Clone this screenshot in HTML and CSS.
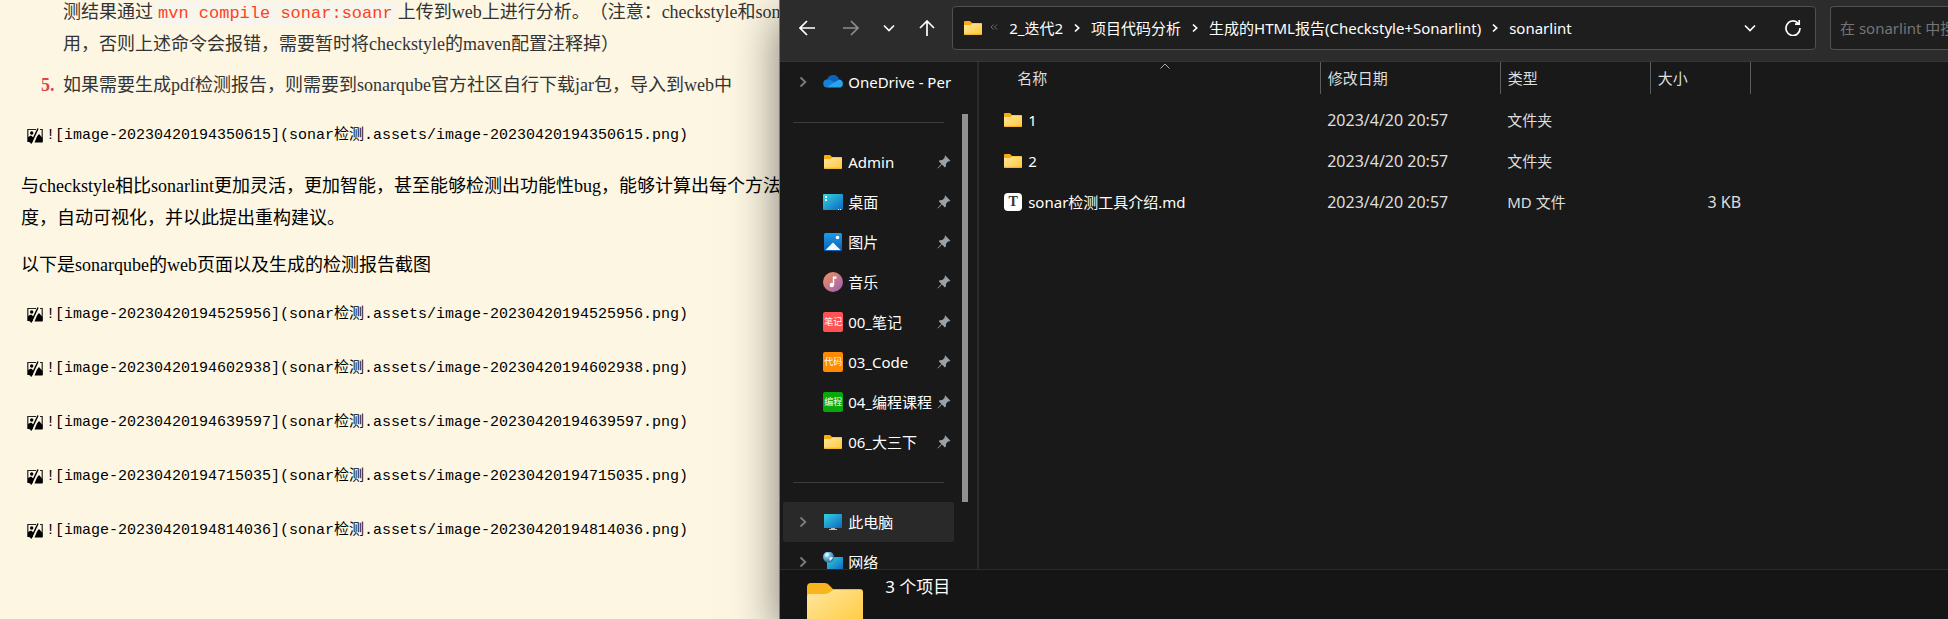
FILE: index.html
```html
<!DOCTYPE html>
<html lang="zh-CN">
<head>
<meta charset="utf-8">
<title>sonarlint</title>
<link rel="stylesheet" href="styles.css">
</head>
<body>
<svg class="defs" aria-hidden="true">
  <defs>
    <linearGradient id="g-folder" x1="0" y1="0" x2="1" y2="1"><stop offset="0" stop-color="#ffe7a0"/><stop offset="1" stop-color="#ffc938"/></linearGradient>
    <linearGradient id="g-desk" x1="0" y1="0" x2="1" y2="1"><stop offset="0" stop-color="#35d3e0"/><stop offset="1" stop-color="#0c66c0"/></linearGradient>
    <linearGradient id="g-pic" x1="0" y1="0" x2="0" y2="1"><stop offset="0" stop-color="#1f9be6"/><stop offset="1" stop-color="#0a5fb4"/></linearGradient>
    <linearGradient id="g-music" x1="0" y1="0" x2="1" y2="1"><stop offset="0" stop-color="#f59355"/><stop offset="1" stop-color="#9a5dbd"/></linearGradient>
    <radialGradient id="g-globe" cx=".35" cy=".3" r=".8"><stop offset="0" stop-color="#c9ecfb"/><stop offset=".5" stop-color="#5ba7d0"/><stop offset="1" stop-color="#1d5f8d"/></radialGradient>
  </defs>
  <symbol id="folder" viewBox="0 0 18 14"><path d="M0 1q0-1 1-1h5l2 2h9q1 0 1 1v4H0z" fill="#f6ac12"/><path d="M0 4h6.500l1.500-1.500h9.500q.5 0 .5.500V13q0 1-1 1H1q-1 0-1-1z" fill="url(#g-folder)"/><path d="M0 13.300h18" stroke="#e9a61c" stroke-width=".8"/></symbol>
  <symbol id="pin" viewBox="0 0 14 14"><path d="M8.300.6 13.400 5.700 12.300 6.400 11.300 6.300 9 8.800 8.900 11.400 7.900 12.400 5 9.500 1.200 13.300.5 13.500.7 12.800 4.400 8.900 1.700 6.200 2.700 5.200 5.300 5.100 7.700 2.800 7.600 1.600z" fill="#98a2a8"/></symbol>
  <symbol id="chev" viewBox="0 0 8 12"><path d="M1.500 1.500 6.300 6l-4.800 4.500" fill="none" stroke="currentColor" stroke-width="1.800"/></symbol>
  <symbol id="crumb" viewBox="0 0 6 10"><path d="M1 1.500 4.700 5 1 8.500" fill="none" stroke="currentColor" stroke-width="1.700"/></symbol>
  <symbol id="down" viewBox="0 0 12 8"><path d="m1 1.500 5 5 5-5" fill="none" stroke="currentColor" stroke-width="1.600"/></symbol>
  <symbol id="broken" viewBox="0 0 16 16"><path d="M6 13.500H.8V1.500H9M13 1.500h2.200v12H14" fill="none" stroke="#222" stroke-width="1.200"/><circle cx="4.700" cy="5" r="1.700"/><path d="M1 13.500V9l3-1.500L7 10l-3 5zM7.500 14.500l2.500-6 2-2.500 3.500 4v4.500z"/><path d="M11 .5 4 15.500" stroke="#000" stroke-width="1.500"/></symbol>
</svg>
<div class="desktop">
  <article class="doc">
    <ol class="steps">
      <li class="cont">测结果通过<code class="cmd">mvn compile sonar:soanr</code>上传到web上进行分析。（注意：checkstyle和sona<br>用，否则上述命令会报错，需要暂时将checkstyle的maven配置注释掉）</li>
      <li value="5">如果需要生成pdf检测报告，则需要到sonarqube官方社区自行下载jar包，导入到web中</li>
    </ol>
    <p class="missing"><svg><use href="#broken"/></svg><code>![image-20230420194350615](sonar检测.assets/image-20230420194350615.png)</code></p>
    <p class="para">与checkstyle相比sonarlint更加灵活，更加智能，甚至能够检测出功能性bug，能够计算出每个方法<br>度，自动可视化，并以此提出重构建议。</p>
    <p class="para">以下是sonarqube的web页面以及生成的检测报告截图</p>
    <div class="shots">
      <p class="missing"><svg><use href="#broken"/></svg><code>![image-20230420194525956](sonar检测.assets/image-20230420194525956.png)</code></p>
      <p class="missing"><svg><use href="#broken"/></svg><code>![image-20230420194602938](sonar检测.assets/image-20230420194602938.png)</code></p>
      <p class="missing"><svg><use href="#broken"/></svg><code>![image-20230420194639597](sonar检测.assets/image-20230420194639597.png)</code></p>
      <p class="missing"><svg><use href="#broken"/></svg><code>![image-20230420194715035](sonar检测.assets/image-20230420194715035.png)</code></p>
      <p class="missing"><svg><use href="#broken"/></svg><code>![image-20230420194814036](sonar检测.assets/image-20230420194814036.png)</code></p>
    </div>
  </article>

  <section class="explorer">
    <header class="toolbar">
      <div class="history">
        <button aria-label="后退"><svg class="i16" viewBox="0 0 16 16"><path d="M16 8H1.500M8 1 1 8l7 7"/></svg></button>
        <button class="off" aria-label="前进"><svg class="i16" viewBox="0 0 16 16"><path d="M0 8h14.500M8 1l7 7-7 7"/></svg></button>
        <button aria-label="最近"><svg class="i12"><use href="#down"/></svg></button>
        <button aria-label="向上"><svg class="i16" viewBox="0 0 16 16"><path d="M8 16V1.500M1 8l7-7 7 7"/></svg></button>
      </div>
      <nav class="address" aria-label="路径">
        <svg class="folder"><use href="#folder"/></svg>
        <svg class="more" viewBox="0 0 8 6"><path d="M3.500.5 1 3l2.500 2.500M7 .5 4.500 3 7 5.500"/></svg>
        <a href="#">2_迭代2</a><svg class="crumb"><use href="#crumb"/></svg>
        <a href="#">项目代码分析</a><svg class="crumb"><use href="#crumb"/></svg>
        <a href="#">生成的HTML报告(Checkstyle+Sonarlint)</a><svg class="crumb"><use href="#crumb"/></svg>
        <a href="#">sonarlint</a>
        <div class="tools">
          <button aria-label="展开"><svg class="i12"><use href="#down"/></svg></button>
          <button aria-label="刷新"><svg class="i16" viewBox="0 0 16 16"><path d="M13.300 3.500A7 7.300 0 1 0 15 8M14.200 0v4.200H10"/></svg></button>
        </div>
      </nav>
      <input class="search" type="text" placeholder="在 sonarlint 中搜索" aria-label="搜索">
    </header>

    <div class="main">
      <nav class="side" aria-label="导航">
        <div class="tree">
          <a class="node" href="#"><svg class="chev"><use href="#chev"/></svg><svg class="ic" viewBox="0 0 20 20"><path d="M4 9a6.200 6.200 0 0 1 12-2l-4 6z" fill="#0b62b8"/><path d="M4.500 7.500C7 7 9 8.500 12 11l-7 4.500H4A4 4 0 0 1 4.500 7.500z" fill="#1583d8"/><path d="M16 7.500a4.200 4.200 0 0 1 1.500 8H4.500Q8 12 11 10.500t5-3z" fill="#2aa4ec"/></svg><span>OneDrive - Per</span></a>
          <hr>
          <a class="node" href="#"><i class="chev"></i><svg class="ic" viewBox="-1 -3 20 20"><use href="#folder" width="18" height="14"/></svg><span>Admin</span><svg class="pin"><use href="#pin"/></svg></a>
          <a class="node" href="#"><i class="chev"></i><svg class="ic" viewBox="0 0 20 20"><rect y="2" width="20" height="16" rx="1" fill="url(#g-desk)"/><path d="M2 4h2v2H2zM2 7h2v2H2zM15 17h1v1h-1zM17 17h1v1h-1z" fill="#fff"/></svg><span>桌面</span><svg class="pin"><use href="#pin"/></svg></a>
          <a class="node" href="#"><i class="chev"></i><svg class="ic" viewBox="0 0 20 20"><rect x="1" y="1" width="18" height="18" rx="1.500" fill="url(#g-pic)"/><circle cx="14.500" cy="5.500" r="1.800" fill="#fff"/><path d="M2.500 18 10 10.500 17.500 18z" fill="#f2f8fd"/></svg><span>图片</span><svg class="pin"><use href="#pin"/></svg></a>
          <a class="node" href="#"><i class="chev"></i><svg class="ic" viewBox="0 0 20 20"><circle cx="10" cy="10" r="10" fill="url(#g-music)"/><circle cx="8.800" cy="13" r="2.200" fill="#fff"/><path d="M9.800 13V4.500h3.700v2.200h-2.300V13z" fill="#fff"/></svg><span>音乐</span><svg class="pin"><use href="#pin"/></svg></a>
          <a class="node" href="#"><i class="chev"></i><b class="ic tag red">笔记</b><span>00_笔记</span><svg class="pin"><use href="#pin"/></svg></a>
          <a class="node" href="#"><i class="chev"></i><b class="ic tag orange">代码</b><span>03_Code</span><svg class="pin"><use href="#pin"/></svg></a>
          <a class="node" href="#"><i class="chev"></i><b class="ic tag green">编程</b><span>04_编程课程</span><svg class="pin"><use href="#pin"/></svg></a>
          <a class="node" href="#"><i class="chev"></i><svg class="ic" viewBox="-1 -3 20 20"><use href="#folder" width="18" height="14"/></svg><span>06_大三下</span><svg class="pin"><use href="#pin"/></svg></a>
          <hr>
          <a class="node active" href="#"><svg class="chev"><use href="#chev"/></svg><svg class="ic" viewBox="0 0 20 20"><rect x="1" y="2" width="18" height="14" rx=".5" fill="url(#g-desk)"/><path d="M8 16h4v1h2v1H6v-1h2z" fill="#b9c4ca"/></svg><span>此电脑</span></a>
          <a class="node" href="#"><svg class="chev"><use href="#chev"/></svg><svg class="ic" viewBox="0 0 20 20"><rect x="4" y="5" width="16" height="13" rx=".5" fill="url(#g-desk)"/><circle cx="5.500" cy="5" r="5.500" fill="url(#g-globe)"/><path d="M2 3q2-3 4-1L4 5zM6 6q3-2 4 0L7 9z" fill="#e3f5fc"/></svg><span>网络</span></a>
        </div>
        <div class="scroll"></div>
      </nav>
      <div class="files">
        <table>
          <colgroup><col class="c-name"><col class="c-date"><col class="c-type"><col class="c-size"></colgroup>
          <thead><tr><th class="name">名称<svg class="sort" viewBox="0 0 10 6"><path d="m.5 5.500 4.500-4.500 4.500 4.500"/></svg></th><th>修改日期</th><th>类型</th><th>大小</th></tr></thead>
          <tbody>
            <tr><td class="name"><div><svg class="folder"><use href="#folder"/></svg>1</div></td><td class="date">2023/4/20 20:57</td><td>文件夹</td><td></td></tr>
            <tr><td class="name"><div><svg class="folder"><use href="#folder"/></svg>2</div></td><td class="date">2023/4/20 20:57</td><td>文件夹</td><td></td></tr>
            <tr><td class="name"><div><b class="md">T</b>sonar检测工具介绍.md</div></td><td class="date">2023/4/20 20:57</td><td>MD 文件</td><td class="size">3 KB</td></tr>
          </tbody>
        </table>
      </div>
    </div>

    <footer class="status">
      <svg class="big" viewBox="0 0 56 46"><path d="M0 4q0-4 4-4h14q3 0 5 3l3 3h27q3 0 3 3v10H0z" fill="#f9b51c"/><path d="M0 14q0-3 3-3h15q3 0 5-2l3-2h27q3 0 3 3v36H0z" fill="url(#g-folder)"/></svg>
      <span>3 个项目</span>
    </footer>
  </section>
</div>
</body>
</html>
```
FILE: styles.css
```css
* { box-sizing: border-box; }
body { margin: 0; background: #fdf6e3; }
.defs { position: absolute; width: 0; height: 0; }
a { color: inherit; text-decoration: none; }
button { border: 0; padding: 0; background: none; color: inherit; display: flex; }

.desktop { display: grid; grid-template-columns: 2fr 3fr; height: 100vh; overflow: hidden; }

/* document */
.doc {
  min-width: 0;
  padding-left: 21px;
  white-space: nowrap;
  text-spacing-trim: space-all;
  color: #000;
  font: 400 18px/32px "Liberation Serif", "Noto Sans CJK SC", serif;
}
.steps { margin: -4px 0 19px; padding-left: 38px; color: #333; }
.steps li { padding-left: 4px; }
.steps li + li { margin-top: 9px; }
.steps .cont { list-style: none; }
.steps li::marker { color: #dc4654; font-weight: 700; }
.cmd {
  padding: 2px 5px;
  border-radius: 4px;
  background: #f8f5ec;
  color: #ff4122;
  font: 17px "Liberation Mono", monospace;
}
.missing { display: flex; align-items: center; gap: 3px; margin: 0; padding-left: 6px; }
.missing svg { width: 16px; height: 16px; }
.missing code { font: 15px/32px "Liberation Mono", "Noto Sans CJK SC", monospace; }
.para { margin: 18px 0 15px; }
.para + .para { margin-top: 15px; }
.shots { display: grid; gap: 22px; margin-top: 18px; }

/* file explorer */
.explorer {
  position: relative;
  display: flex;
  flex-direction: column;
  min-width: 0;
  min-height: 0;
  border-left: 1px solid #777;
  background: #191919;
  color: #fff;
  font: 15px/20px "Noto Sans", "Noto Sans CJK SC", sans-serif;
  box-shadow: 0 16px 44px rgba(0, 0, 0, .5);
}
.toolbar {
  display: flex;
  flex: none;
  align-items: flex-start;
  height: 62px;
  padding-top: 6px;
  border-bottom: 1px solid #363636;
  background: #2c2c2c;
}
.toolbar svg { fill: none; stroke: currentColor; stroke-width: 1.700; }
.history { display: flex; align-items: center; gap: 24px; width: 172px; height: 44px; padding-left: 19px; }
.history button:nth-child(2) { margin-left: 4px; }
.off { color: #8c8c8c; }
.i16 { width: 16px; height: 16px; }
.i12 { width: 12px; height: 8px; }
.address {
  display: flex;
  flex: 1;
  align-items: center;
  gap: 11px;
  min-width: 0;
  height: 44px;
  padding: 0 14px 0 11px;
  border: 1px solid #505050;
  border-radius: 4px;
  background: #1e1e1e;
  white-space: nowrap;
}
.toolbar .folder { stroke: none; }
.folder { flex: none; width: 18px; height: 14px; }
.toolbar .more { width: 8px; height: 6px; margin: 0 0 3px -3px; color: #6a6a6a; stroke-width: 1; }
.crumb { flex: none; width: 6px; height: 10px; }
.tools { display: flex; align-items: center; gap: 29px; margin-left: auto; }
.search {
  width: 118px;
  height: 44px;
  margin-left: 14px;
  padding: 0 0 0 9px;
  border: 1px solid #505050;
  border-right: 0;
  border-radius: 4px 0 0 4px;
  background: #1e1e1e;
  color: #fff;
  font: inherit;
}
.search::placeholder { color: #757575; opacity: 1; }

.main { display: flex; flex: 1; min-height: 0; }
.side { display: flex; flex: none; gap: 8px; width: 199px; padding-left: 3px; border-right: 2px solid #2a2a2a; overflow: hidden; }
.tree { width: 171px; }
.node { display: flex; align-items: center; height: 40px; padding-left: 16px; border-radius: 2px; white-space: nowrap; }
.node.active { background: #292929; }
.node .chev { flex: none; width: 8px; height: 12px; margin-right: 16px; color: #7d7d7d; }
.node span { flex: 1; min-width: 0; }
.ic { flex: none; width: 20px; height: 20px; margin-right: 5px; }
.tag { border-radius: 2px; font-size: 9px; font-weight: 400; text-align: center; }
.red { background: #ff5252; }
.orange { background: #ff8a00; }
.green { background: #07a807; }
.pin { flex: none; width: 14px; height: 14px; margin-right: 3px; }
.tree hr { height: 1px; margin: 20px 10px 19px; border: 0; background: #3c3c3c; }
.scroll { width: 6px; height: 388px; margin-top: 52px; background: #919191; }

.files { flex: 1; min-width: 0; }
table { width: 771px; border-collapse: collapse; table-layout: fixed; color: #dedede; }
.c-name { width: 341px; }
.c-date { width: 180px; }
.c-type { width: 150px; }
.c-size { width: 100px; }
th { position: relative; height: 32px; padding: 0 7px; border-right: 1px solid #5c5c5c; font-weight: 400; text-align: left; }
th.name { padding-left: 38px; }
.sort { position: absolute; top: 1px; left: 181px; width: 10px; height: 6px; fill: none; stroke: #aaa; }
td { height: 41px; padding: 0 7px; }
tbody::before { content: ""; display: table-row; height: 5px; }
td.name { padding-left: 25px; color: #fff; }
td.name div { display: flex; align-items: center; gap: 6px; }
.date, .size { font-size: 16px; }
.size { padding-right: 9px; text-align: right; }
.md { width: 18px; height: 18px; border-radius: 4px; background: #fff; color: #333; font: 700 14px/18px "Liberation Serif", serif; text-align: center; }

.status { display: flex; flex: none; align-items: flex-start; gap: 22px; height: 50px; padding: 0 27px; border-top: 1px solid #2c2c2c; background: #151515; font-size: 17px; line-height: 34px; overflow: hidden; }
.big { flex: none; width: 56px; height: 46px; margin-top: 13px; }
```
